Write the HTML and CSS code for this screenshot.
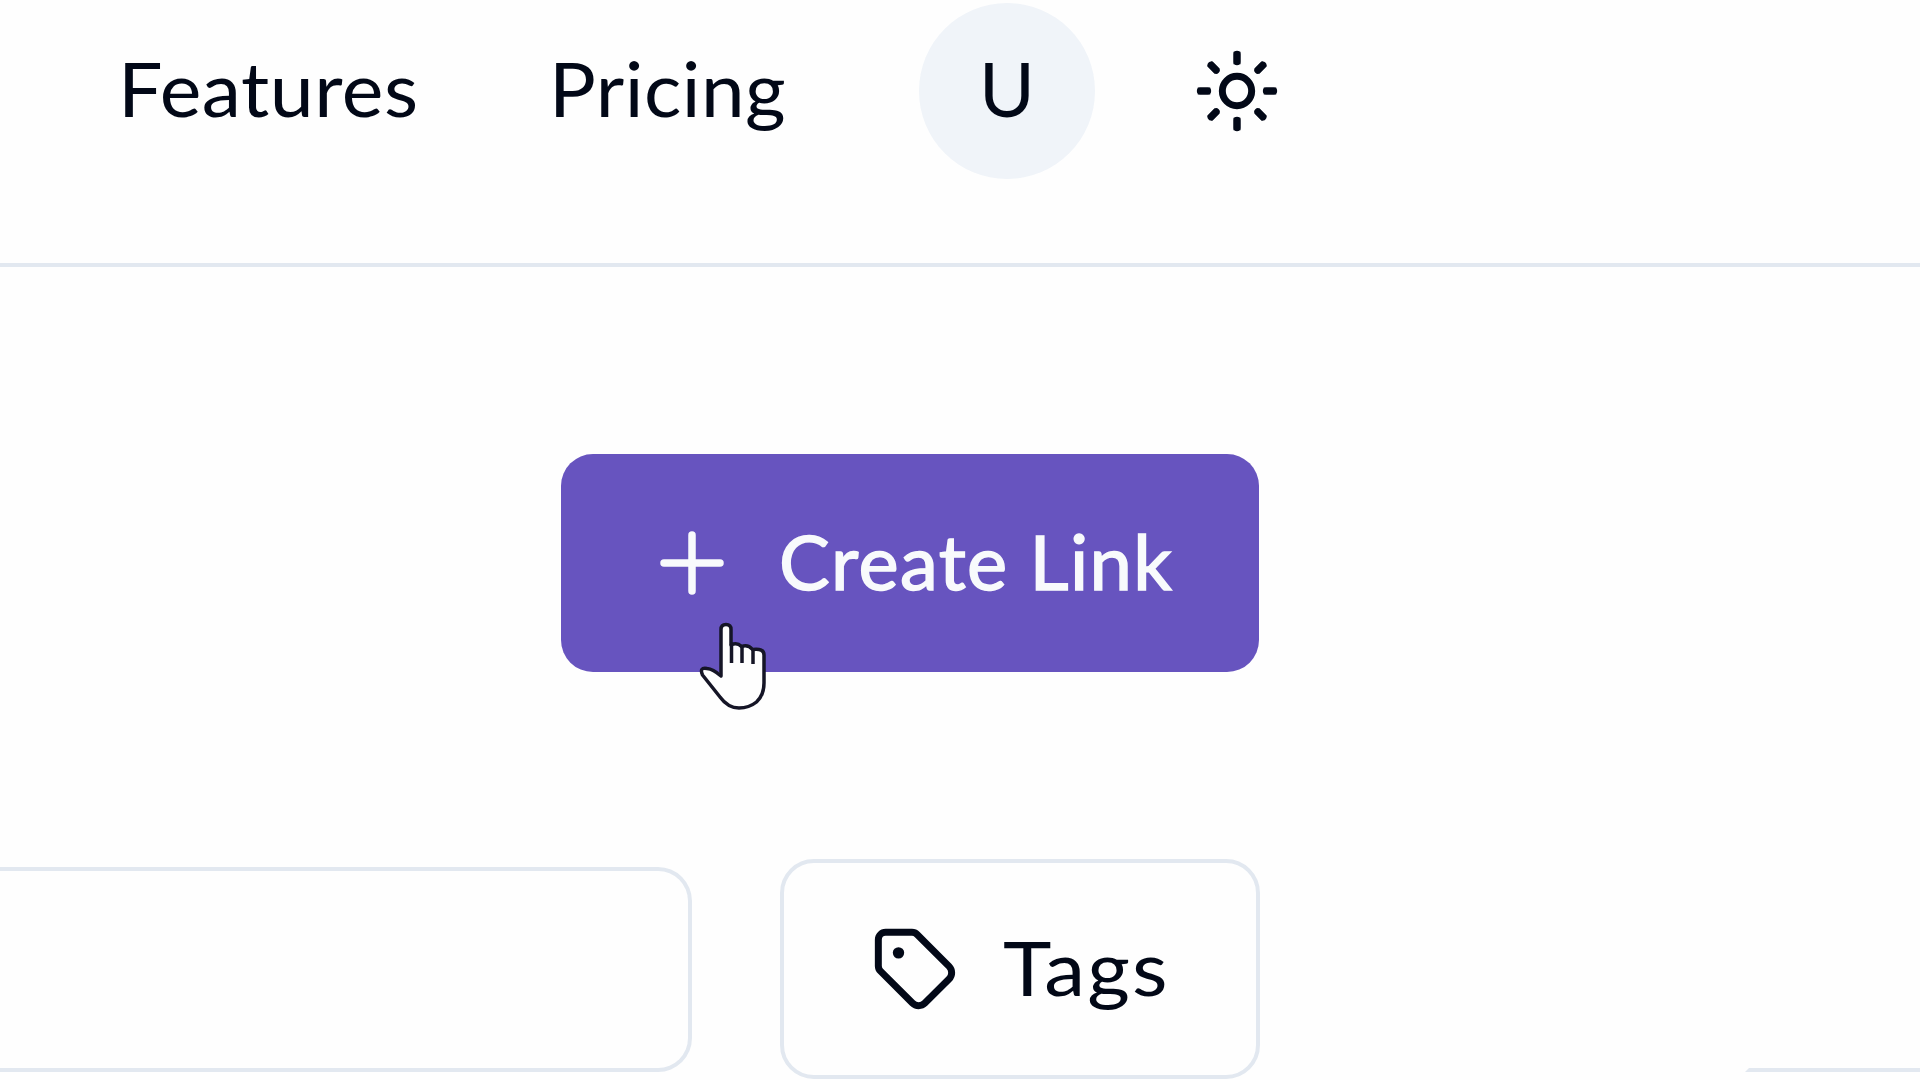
FILE: index.html
```html
<!DOCTYPE html>
<html lang="en">
<head>
<meta charset="utf-8">
<title>Links</title>
<link rel="stylesheet" href="styles.css">
</head>
<body>
<header class="header">
  <nav class="nav">
    <a class="nav-link features">Features</a>
    <a class="nav-link pricing">Pricing</a>
  </nav>
  <div class="avatar"><span>U</span></div>
  <svg class="icon sun" viewBox="0 0 24 24"><circle cx="12" cy="12" r="4"/><path d="M12 1.300v3.400M12 19.300v3.400M4.500 4.500l2.100 2.100M17.400 17.400l2.100 2.100M1.300 12h3.400M19.300 12h3.400M6.600 17.400l-2.100 2.100M19.500 4.500l-2.100 2.100"/><path class="round" d="M12 2v2M12 20v2M4.930 4.930l1.410 1.410M17.660 17.660l1.410 1.410M2 12h2M20 12h2M6.340 17.660l-1.410 1.410M19.070 4.930l-1.410 1.410"/></svg>
</header>
<main class="main">
  <section class="content">
    <button class="create">
      <svg class="plus" viewBox="0 0 64 64"><path d="M4 32H60M32 4V60"/></svg>
      <span class="create-label">Create Link</span>
      <svg class="pointer" viewBox="0 0 72 92"><path d="M22 55V8.500Q22 3.500 27 3.500Q32 3.500 32 8.500V24Q38 21 42.500 25.500Q49 23 53.500 28.500Q65 27 65 34V62Q65 74 57.500 81Q50 87 40 87Q29 87 21 76L3.500 54Q0 46 8 47.500Q14 48 22 55Z"/><path d="M32.500 23V42M43 25V42M54 28V43"/></svg>
    </button>
    <div class="filters">
      <div class="search"></div>
      <button class="tags">
        <svg class="icon" viewBox="0 0 24 24"><path class="round" d="M12.586 2.586A2 2 0 0 0 11.172 2H4a2 2 0 0 0-2 2v7.172a2 2 0 0 0 .586 1.414l8.704 8.704a2.426 2.426 0 0 0 3.420 0l6.580-6.580a2.426 2.426 0 0 0 0-3.420z"/><circle class="dot" cx="7.500" cy="7.600" r="1.550"/></svg>
        <span class="tags-label">Tags</span>
      </button>
    </div>
  </section>
  <aside class="panel"></aside>
</main>
</body>
</html>
```
FILE: styles.css
```css
* { box-sizing: border-box; }
body {
  margin: 0;
  width: 1920px;
  height: 1080px;
  overflow: hidden;
  background: #fefefe;
  color: #020817;
  font: 400 76px/92px Lato, sans-serif;
}
button { margin: 0; padding: 0; font: inherit; color: inherit; background: none; border: 0; }
.header {
  display: flex;
  align-items: flex-start;
  height: 267px;
  padding: 3px 0 0 118px;
  border-bottom: 4px solid #e2e8f0;
}
.nav { display: flex; padding-top: 39px; }
.nav-link { display: block; white-space: nowrap; transform-origin: left; }
.features { width: 431px; letter-spacing: .5px; transform: scaleX(1.037); }
.pricing { width: 370px; letter-spacing: .5px; transform: scaleX(1.028); }
.avatar {
  display: flex;
  justify-content: center;
  width: 176px;
  height: 176px;
  padding-top: 39px;
  border-radius: 50%;
  background: #f0f4f9;
}
.icon {
  display: block;
  flex: none;
  width: 88px;
  height: 88px;
  fill: none;
  stroke: #020817;
  stroke-width: 1.900;
  stroke-linejoin: round;
}
.round { stroke-linecap: round; }
.dot { fill: #020817; stroke: none; }
.sun { margin: 44px 0 0 98px; }
.main { display: flex; justify-content: space-between; height: 813px; }
.content { width: 1260px; padding-top: 187px; }
.create {
  position: relative;
  display: flex;
  align-items: center;
  width: 698px;
  height: 218px;
  margin-left: 561px;
  padding-left: 99px;
  border-radius: 32px;
  background: #6754bf;
  color: #f8fafc;
  text-align: left;
}
.plus { width: 64px; height: 64px; fill: none; stroke: #f8fafc; stroke-width: 7.500; stroke-linecap: round; }
.create-label {
  margin-left: 55px;
  padding-bottom: 5px;
  white-space: nowrap;
  letter-spacing: 1.400px;
  -webkit-text-stroke: 1.500px #f8fafc;
}
.pointer {
  position: absolute;
  left: 138px;
  top: 167px;
  width: 72px;
  height: 92px;
  fill: #fefefe;
  stroke: #151526;
  stroke-width: 3.500;
  stroke-linejoin: round;
}
.filters { display: flex; align-items: center; margin-top: 187px; }
.search {
  width: 692px;
  height: 205px;
  border: 4px solid #e2e8f0;
  border-left: 0;
  border-radius: 0 34px 34px 0;
}
.tags {
  display: flex;
  align-items: center;
  width: 480px;
  height: 220px;
  margin-left: 88px;
  padding-left: 87px;
  border: 4px solid #e2e8f0;
  border-radius: 34px;
}
.tags-label {
  margin-left: 44px;
  padding-bottom: 5px;
  letter-spacing: 2px;
  transform: scaleX(1.08);
  transform-origin: left;
}
.panel {
  width: 175px;
  height: 805px;
  border-bottom: 4px solid #e2e8f0;
  border-left: 4px solid transparent;
}
```
